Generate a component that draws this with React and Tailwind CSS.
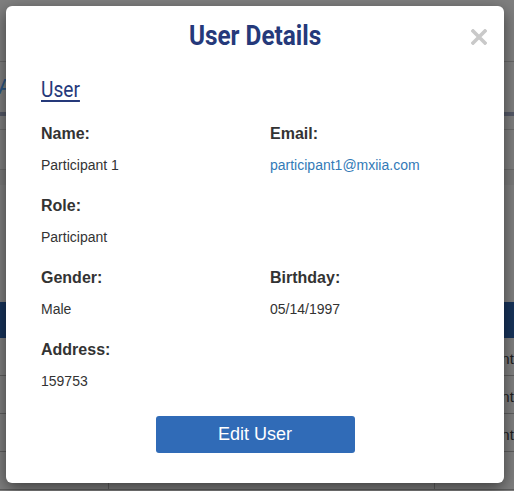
import React from "react";

const Field = ({ label, value, link }) => (
  <div className="flex flex-col">
    <div className="text-[16px] leading-[22px] font-bold text-[#333]">{label}</div>
    <div className={`mt-[10px] text-[14px] leading-[20px] ${link ? "text-[#337ab7]" : "text-[#333]"}`}>{value}</div>
  </div>
);

export default function App() {
  return (
    <div className="relative w-[514px] h-[491px] overflow-hidden bg-[#7f7f7f]" style={{ fontFamily: '"Liberation Sans", Arial, sans-serif' }}>
      {/* dimmed page behind */}
      <div className="flex flex-col">
        <div className="h-[62px] border-b border-[#686868]" />
        <div className="h-[50px] flex items-center">
          <span className="-ml-[2px] text-[22px] leading-[26px] text-[#2b5683]">A</span>
        </div>
        <div className="h-[4px] bg-[#545866]" />
        <div className="h-[14px] border-b border-[#6c6c6c]" />
        <div className="h-[40px] border-b border-[#6c6c6c]" />
        <div className="h-[15px] bg-[#7a7a7a]" />
        <div className="h-[117px]" />
        <div className="h-[36px] bg-[#17335a]" />
        {["Participant", "Participant", "Participant", "Trainee"].map((t, i) => (
          <div key={i} className="h-[38px] flex border-b border-[#5e5e5e] text-[15px] text-[#1e1e1e]">
            <div className="w-[109px] border-r border-[#5e5e5e]" />
            <div className="w-[326px] border-r border-[#5e5e5e]" />
            <div className="flex-1 overflow-hidden whitespace-nowrap pl-[8px] pt-[10px]">{t}</div>
          </div>
        ))}
      </div>

      {/* modal */}
      <div className="absolute left-[6px] top-[6px] w-[498px] h-[477px] bg-white rounded-[6px] shadow-[0_5px_15px_rgba(0,0,0,0.5)] flex flex-col pt-[13px] pb-[30px]">
        <div className="flex justify-center h-[34px]">
          <span className="inline-block scale-x-[0.87] text-[28px] leading-[34px] font-bold text-[#25397a]" style={{ fontFamily: "Roboto, sans-serif" }}>
            User Details
          </span>
        </div>
        <svg className="absolute right-[17px] top-[23px]" width="16" height="16" viewBox="0 0 16 16">
          <path d="M2 2 L14 14 M14 2 L2 14" stroke="#c9c9c9" strokeWidth="3.6" strokeLinecap="square" />
        </svg>

        <div className="pl-[35px] mt-[24px] h-[26px]">
          <span className="inline-block origin-left scale-x-[0.87] text-[22px] leading-[26px] text-[#25397a] underline decoration-[2px] underline-offset-[3px]" style={{ fontFamily: "Roboto, sans-serif" }}>
            User
          </span>
        </div>

        <div className="pl-[35px] mt-[20px] grid grid-cols-[229px_1fr] gap-y-[20px]">
          <Field label="Name:" value="Participant 1" />
          <Field label="Email:" value="participant1@mxiia.com" link />
          <Field label="Role:" value="Participant" />
          <div />
          <Field label="Gender:" value="Male" />
          <Field label="Birthday:" value="05/14/1997" />
          <Field label="Address:" value="159753" />
          <div />
        </div>

        <div className="mt-[25px] flex justify-center">
          <button className="w-[199px] h-[37px] rounded-[3px] bg-[#306bb7] text-white text-[18px] leading-[37px]">
            Edit User
          </button>
        </div>
      </div>
    </div>
  );
}
